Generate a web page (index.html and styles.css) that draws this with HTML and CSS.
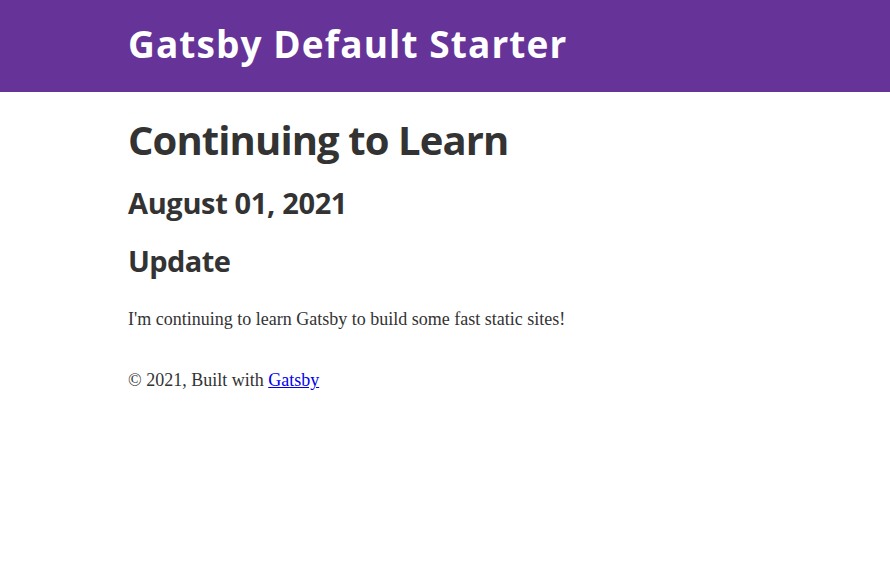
FILE: index.html
```html
<!DOCTYPE html>
<html lang="en">
<head>
<meta charset="utf-8">
<title>Continuing to Learn</title>
<link rel="stylesheet" href="styles.css">
</head>
<body>
<header class="site-header">
  <div class="container">
    <h1 class="site-title"><a href="#">Gatsby Default Starter</a></h1>
  </div>
</header>
<div class="container">
  <main class="main">
    <h1 class="post-title">Continuing to Learn</h1>
    <h2 class="post-date">August 01, 2021</h2>
    <h2 class="post-section">Update</h2>
    <p class="post-body">I'm continuing to learn Gatsby to build some fast static sites!</p>
  </main>
  <footer class="footer">© 2021, Built with <a href="#">Gatsby</a></footer>
</div>
</body>
</html>
```
FILE: styles.css
```css
html, body {
  margin: 0;
  padding: 0;
  background: #fff;
}
body {
  font-family: "Liberation Serif", serif;
  font-size: 18px;
  color: #333;
}
.container {
  width: 634px;
  margin: 0 auto;
}
.site-header {
  background: #663399;
  height: 92px;
  display: flex;
  align-items: center;
}
.site-title {
  margin: 0 0 4px;
  font-family: "Open Sans", sans-serif;
  font-weight: 700;
  font-size: 37px;
  letter-spacing: 1.1px;
  line-height: 1.2;
}
.site-title a {
  color: #fff;
  text-decoration: none;
}
.main h1, .main h2 {
  font-family: "Open Sans", sans-serif;
  font-weight: 700;
  color: #333;
  margin: 0;
}
.post-title {
  font-size: 40px;
  letter-spacing: -0.9px;
  padding-top: 20px;
}
.post-date {
  font-size: 29px;
  letter-spacing: -0.35px;
  margin-top: 16px !important;
}
.post-section {
  font-size: 29px;
  letter-spacing: -0.6px;
  margin-top: 19px !important;
}
.post-body {
  margin: 26px 0 0;
  line-height: 1.5;
}
.footer {
  margin-top: 34px;
  line-height: 1.5;
}
.footer a {
  color: #0000ee;
}
```
